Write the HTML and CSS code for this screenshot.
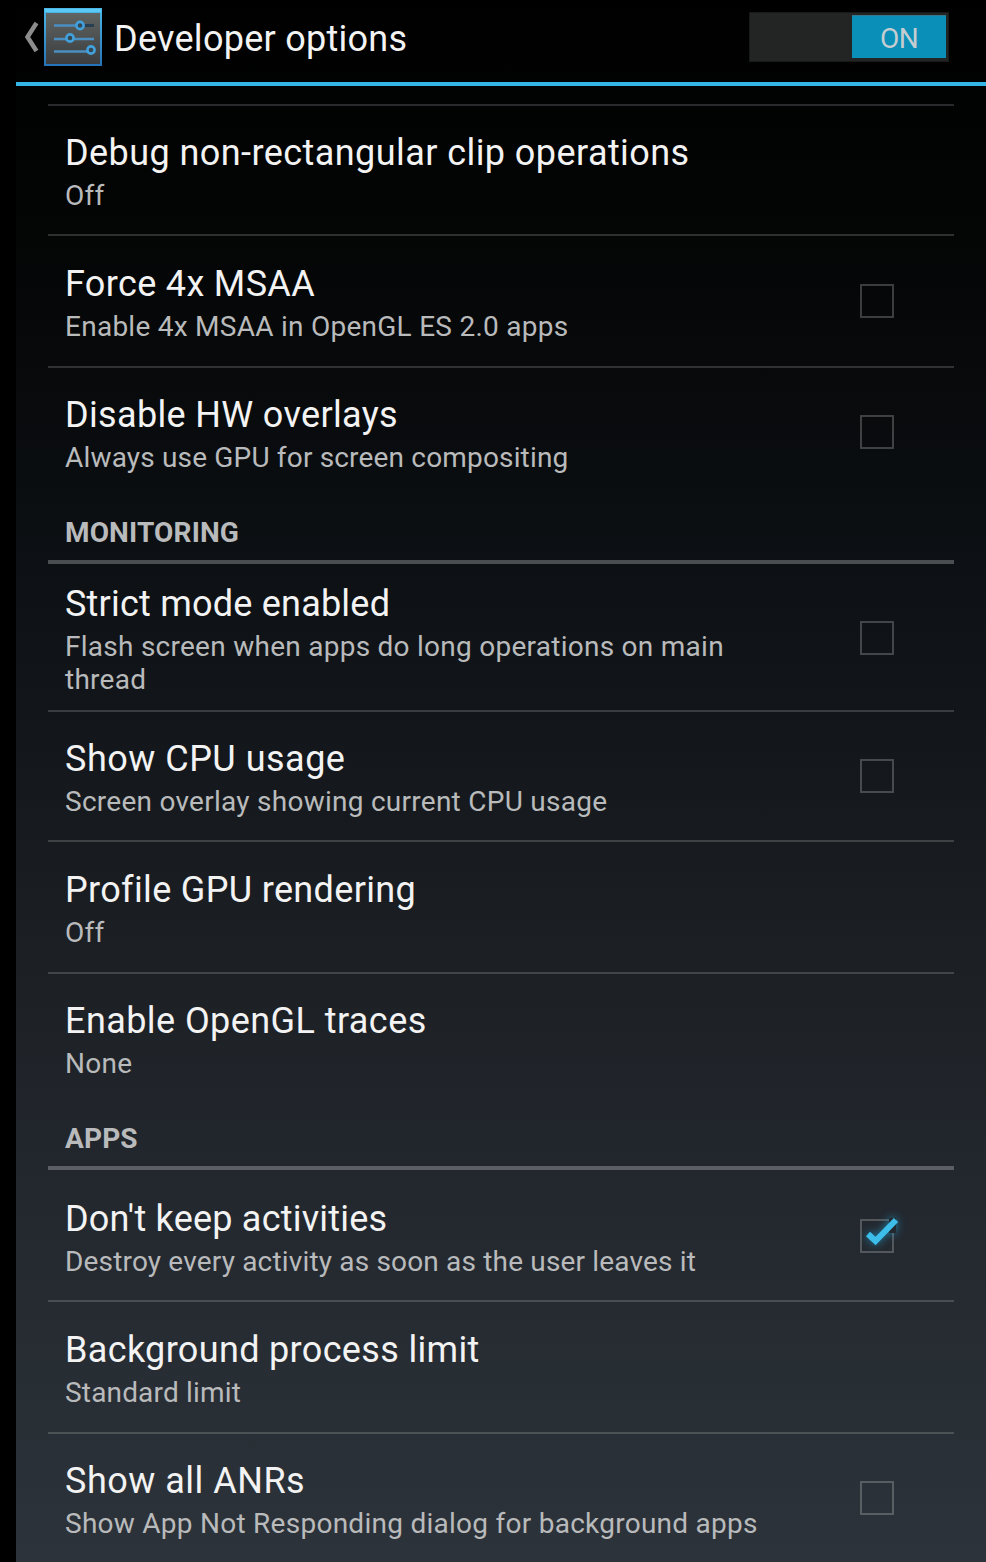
FILE: index.html
```html
<!DOCTYPE html>
<html lang="en">
<head>
<meta charset="utf-8">
<title>Developer options</title>
<link rel="stylesheet" href="styles.css">
</head>
<body>
<main class="screen">
<header class="bar">
<svg class="back" width="20" height="40" viewBox="0 0 20 40"><path d="M14.500 4 5.500 18 14.500 32" fill="none" stroke="#8c8c8c" stroke-width="4.500"/></svg>
<svg class="logo" width="58" height="58" viewBox="0 0 58 58">
<defs><linearGradient id="edge" x2="0" y2="1"><stop stop-color="#4bb8e8"/><stop offset="1" stop-color="#2572b8"/></linearGradient><linearGradient id="face" x2="0" y2="1"><stop stop-color="#606462"/><stop offset="1" stop-color="#3b3d3e"/></linearGradient></defs>
<path fill="url(#edge)" d="M0 0h58v58H0z"/><path fill="#5ac9f5" d="M1 1h56v3H1z"/><path fill="url(#face)" d="M2 5h54v51H2z"/>
<path d="M10 17.500h28M10 31h40M10 43.500h34" stroke="#4b8fc2" stroke-width="2.600"/><path d="M40 17.500h10" stroke="#263f52" stroke-width="3"/>
<g fill="#354852" stroke="#42a0db" stroke-width="2.600"><circle cx="36" cy="17.500" r="3.600"/><circle cx="26" cy="30" r="3.600"/><circle cx="47" cy="42" r="3.600"/></g>
</svg>
<h1 class="name">Developer options</h1>
<div class="switch"><span class="thumb">ON</span></div>
</header>
<section class="list">
<div class="row first"><div><h2 class="wide">Debug non-rectangular clip operations</h2><p>Off</p></div></div>
<div class="row"><div><h2>Force 4x MSAA</h2><p>Enable 4x MSAA in OpenGL ES 2.0 apps</p></div><i class="box"></i></div>
<div class="row last"><div><h2>Disable HW overlays</h2><p class="snug">Always use GPU for screen compositing</p></div><i class="box"></i></div>
<h3>MONITORING</h3>
<div class="row tall"><div><h2 class="snug">Strict mode enabled</h2><p>Flash screen when apps do long operations on main thread</p></div><i class="box"></i></div>
<div class="row short"><div><h2 class="wider">Show CPU usage</h2><p>Screen overlay showing current CPU usage</p></div><i class="box"></i></div>
<div class="row"><div><h2>Profile GPU rendering</h2><p>Off</p></div></div>
<div class="row last"><div><h2 class="wide">Enable OpenGL traces</h2><p>None</p></div></div>
<h3>APPS</h3>
<div class="row lead"><div><h2 class="snug">Don't keep activities</h2><p class="snug">Destroy every activity as soon as the user leaves it</p></div><i class="box"><svg class="check" width="60" height="60" viewBox="-10 -12 60 60"><path d="M29 -1 36 -1V14H29z" fill="#23282f"/><path d="M8 15 15.500 22 36 1" fill="none" stroke="#3cbdea" stroke-width="6"/></svg></i></div>
<div class="row"><div><h2>Background process limit</h2><p class="snug">Standard limit</p></div></div>
<div class="row last"><div><h2 class="wider">Show all ANRs</h2><p>Show App Not Responding dialog for background apps</p></div><i class="box"></i></div>
</section>
</main>
</body>
</html>
```
FILE: styles.css
```css
* { box-sizing: border-box; margin: 0; padding: 0; }
body { background: #000; padding-left: 16px; height: 1562px; overflow: hidden; font-family: Roboto, sans-serif; }
.screen { height: 1562px; overflow: hidden; background: linear-gradient(#000 0, #040505 240px, #0b0e11 500px, #12161a 710px, #1b1f23 930px, #23282f 1200px, #2d333a 1562px); }
.bar { display: flex; height: 86px; padding: 8px 37px 0 6px; border-bottom: 4px solid #33b5e5; }
.back { margin: 11px 2px 0 0; }
.logo { flex: none; }
.name { margin: 10px 0 0 12px; font-size: 36px; line-height: 42px; font-weight: 400; letter-spacing: .27px; color: #f3f3f3; white-space: nowrap; }
.switch { width: 200px; height: 50px; margin: 4px 0 0 auto; padding: 2px 2px 3px 102px; background: #232424; border: 1px solid #181919; }
.thumb { display: block; height: 43px; text-align: center; font-size: 28px; line-height: 46px; letter-spacing: -.5px; color: #c5cdd0; background: #098fb8; border-top: 1px solid #36798d; }
.list { margin: 18px 32px 0; border-top: 2px solid #292a2b; }
.row { display: flex; justify-content: space-between; height: 132px; padding: 27px 60px 0 17px; border-bottom: 2px solid rgba(255,255,255,.17); }
h2 { font-size: 36px; line-height: 42px; font-weight: 400; letter-spacing: .34px; color: #f3f3f3; white-space: nowrap; }
h2.snug { letter-spacing: .22px; }
h2.wide { letter-spacing: .43px; }
h2.wider { letter-spacing: .5px; }
p { margin-top: 5px; width: 720px; font-size: 28px; line-height: 33px; letter-spacing: .26px; color: #b9babb; }
p.snug { letter-spacing: .17px; }
.first { height: 130px; padding-top: 26px; }
.last { height: 134px; padding-top: 26px; border: 0; }
.box { position: relative; width: 34px; height: 34px; margin-top: 21px; border: 2px solid rgba(255,255,255,.22); }
.check { position: absolute; left: -12px; top: -14px; filter: drop-shadow(0 0 4px rgba(30,165,215,.7)); }
.tall { height: 148px; padding-top: 19px; }
.tall .box { margin-top: 38px; }
.short { height: 130px; padding-top: 26px; }
.lead { padding-top: 28px; }
h3 { height: 62px; padding: 14px 17px 0; font-size: 28px; line-height: 33px; letter-spacing: .15px; color: #b9babb; border-bottom: 4px solid rgba(255,255,255,.26); }
```
